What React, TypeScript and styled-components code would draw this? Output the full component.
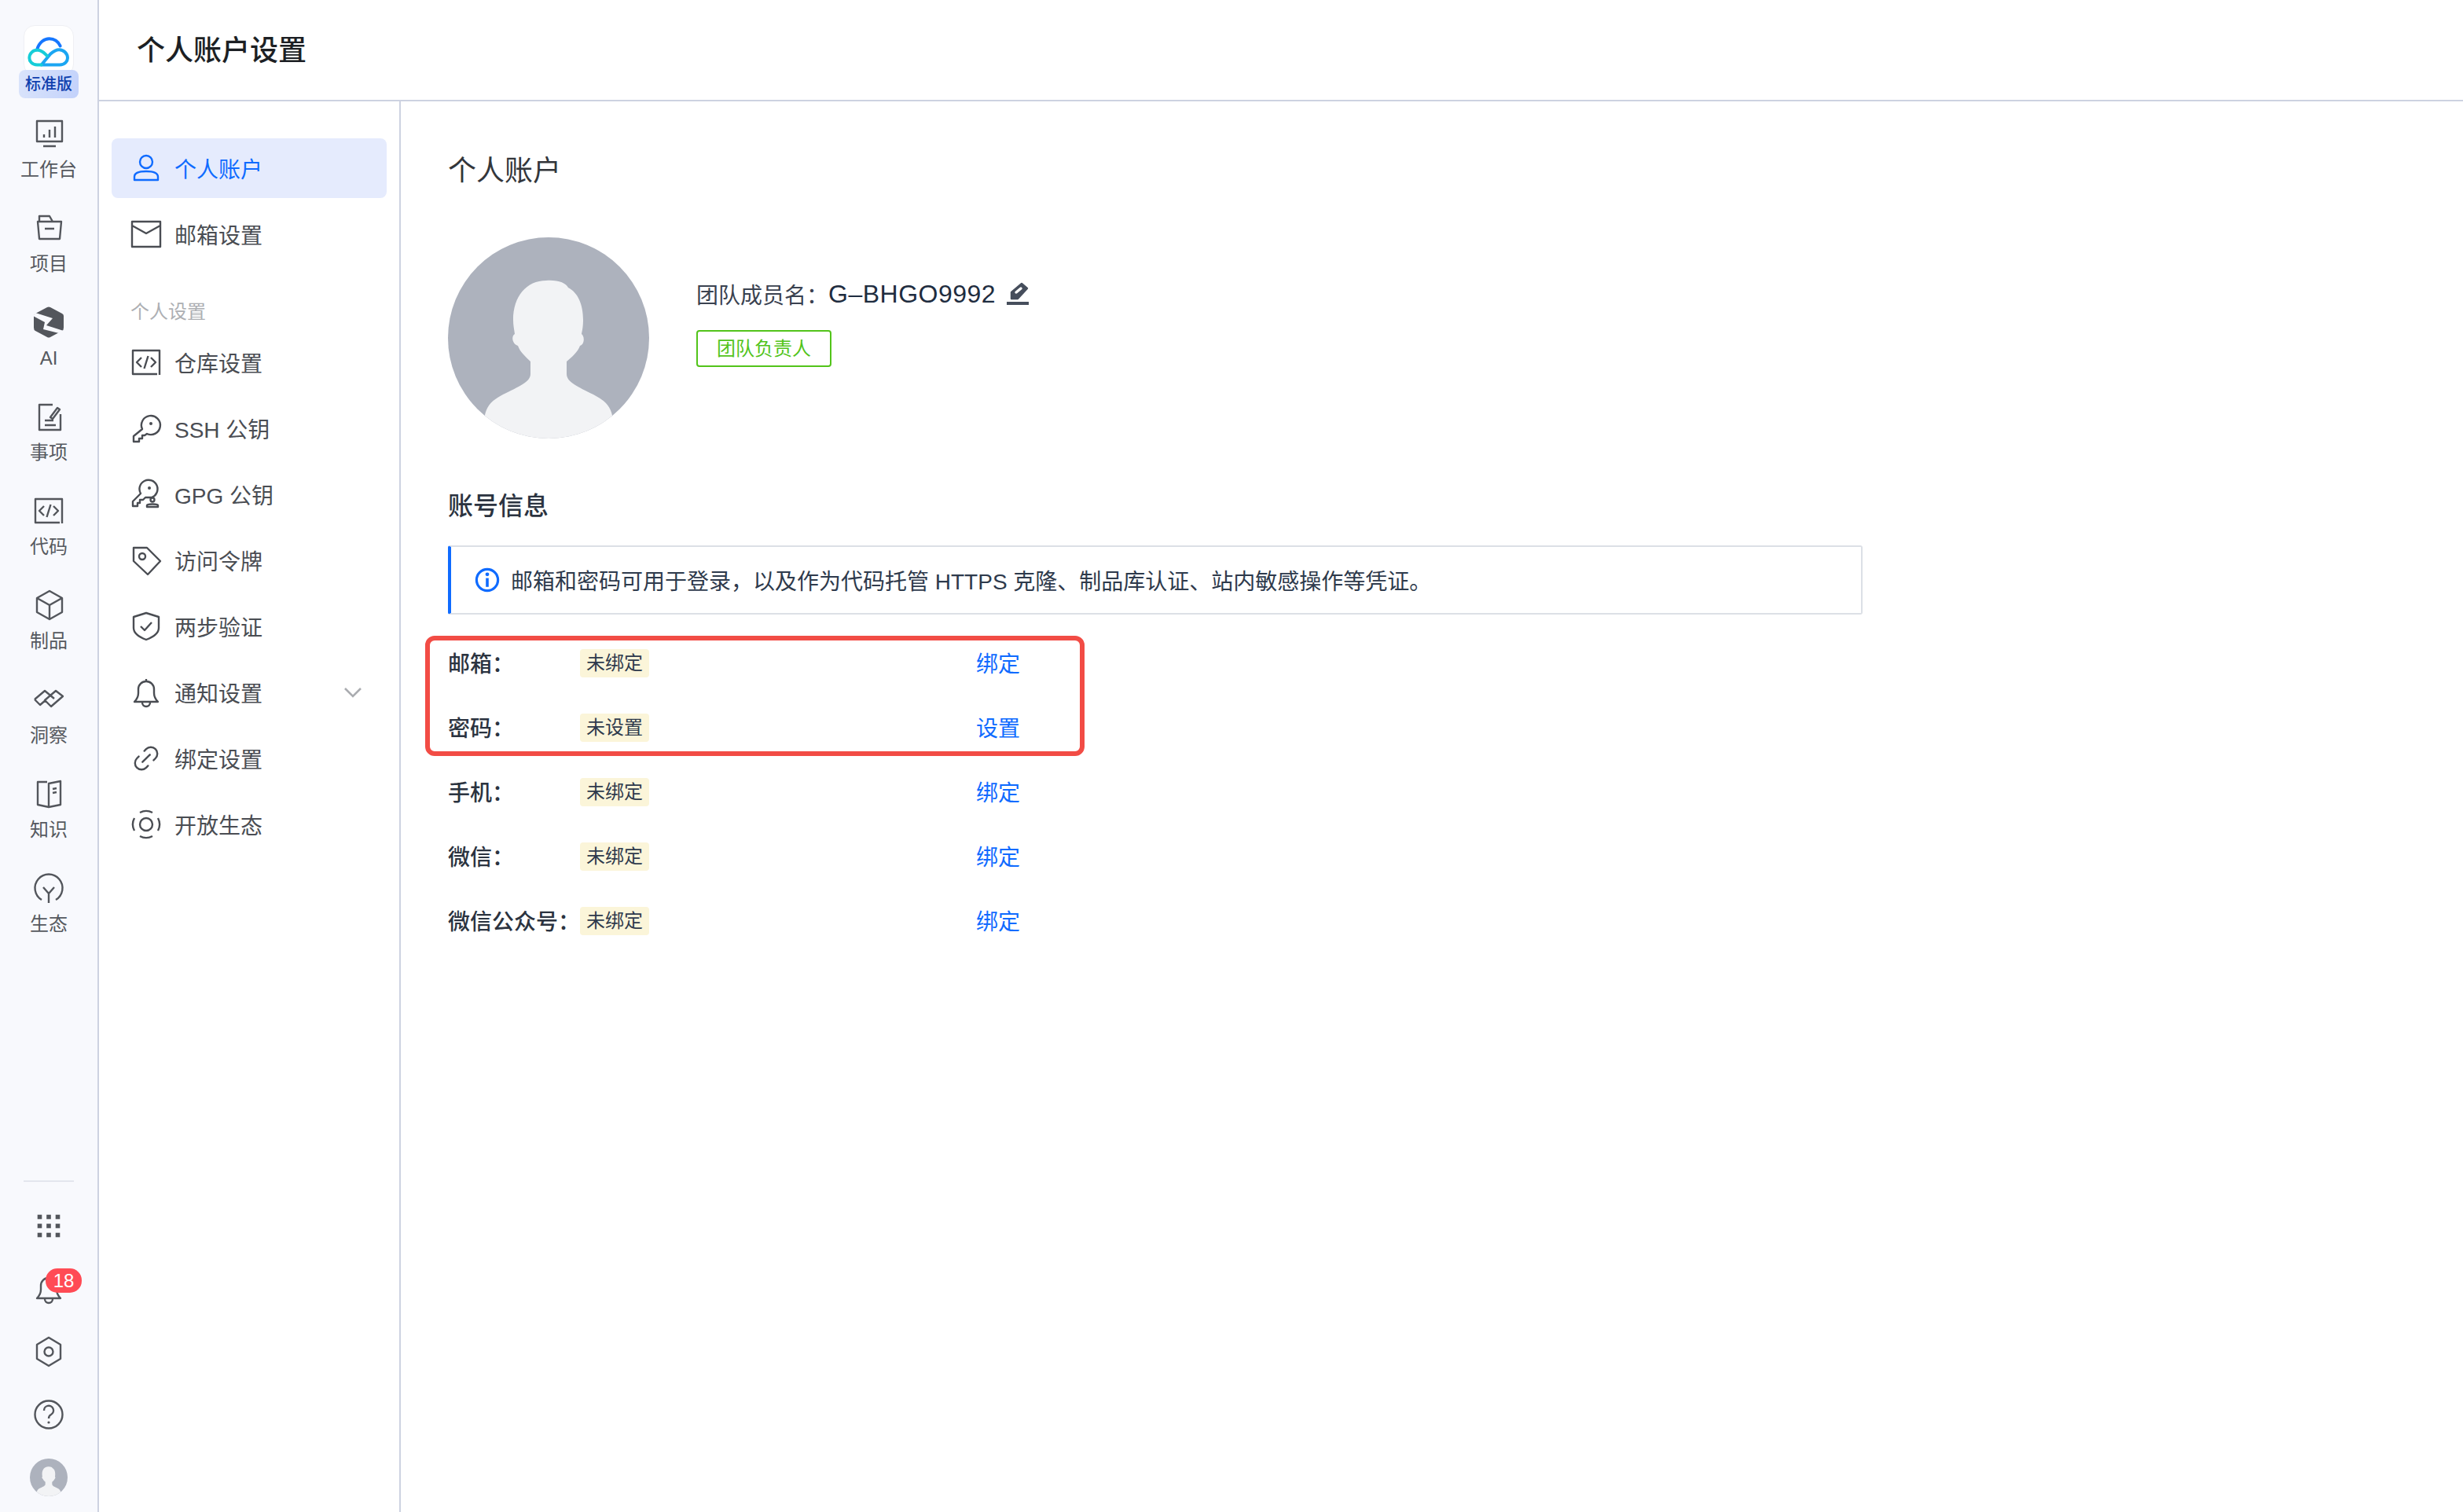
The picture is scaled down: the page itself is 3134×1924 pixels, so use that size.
import React from "react"
import styled, { createGlobalStyle } from "styled-components"
import { Link2 } from "lucide-react"

const GlobalStyle = createGlobalStyle`
  * {
    box-sizing: border-box;
  }
  html, body {
    margin: 0;
    padding: 0;
    background: #fff;
    font-family: "Liberation Sans", "Noto Sans CJK SC", sans-serif;
  }
`

const Page = styled.div`
  display: flex;
  width: 100vw;
  height: 100vh;
  overflow: hidden;
`

/* left rail */
const Rail = styled.aside`
  width: 126px;
  flex-shrink: 0;
  display: flex;
  flex-direction: column;
  align-items: center;
  padding: 32px 0 4px;
  background: #f8f9fd;
  border-right: 2px solid #cdd2e1;
`
const LogoBox = styled.div`
  width: 64px;
  height: 64px;
  display: flex;
  justify-content: center;
  padding-top: 12px;
  background: #fff;
  border: 1px solid #eff0f4;
  border-radius: 14px;
`
const EditionChip = styled.div`
  position: relative;
  width: 76px;
  height: 36px;
  margin-top: -7px;
  margin-bottom: 10px;
  border-radius: 8px;
  background: linear-gradient(100deg, #dae4fb, #c3d2fb);
  color: #0f3fae;
  font-size: 20px;
  font-weight: 500;
  line-height: 36px;
  text-align: center;
`
const RailNav = styled.nav`
  width: 100%;
`
const RailItem = styled.a`
  height: 120px;
  display: flex;
  flex-direction: column;
  align-items: center;
  padding-top: 15px;
  color: #53565c;
`
const RailLabel = styled.span`
  margin-top: 9px;
  font-size: 24px;
  line-height: 34px;
  color: #56595f;
`
const RailBottom = styled.div`
  width: 100%;
  margin-top: auto;
  display: flex;
  flex-direction: column;
  align-items: center;
`
const RailDivider = styled.div`
  width: 64px;
  height: 2px;
  margin-bottom: 16px;
  background: #e3e6ee;
`
const RailTool = styled.a`
  position: relative;
  width: 100%;
  height: 80px;
  display: flex;
  align-items: center;
  justify-content: center;
  color: #53565c;
`
const CountBadge = styled.span`
  position: absolute;
  top: 14px;
  left: 58px;
  width: 46px;
  height: 31px;
  border-radius: 15px;
  background: #ff4b55;
  color: #fff;
  font-size: 24px;
  line-height: 31px;
  text-align: center;
`

/* right side */
const Content = styled.div`
  flex: 1;
  min-width: 0;
  display: flex;
  flex-direction: column;
`
const TopBar = styled.header`
  height: 129px;
  flex-shrink: 0;
  padding-left: 48px;
  border-bottom: 2px solid #cdd2e1;
  color: #1c1f24;
  font-size: 36px;
  font-weight: 500;
  line-height: 129px;
`
const Body = styled.div`
  flex: 1;
  display: flex;
  min-height: 0;
`
const SideMenu = styled.div`
  width: 384px;
  flex-shrink: 0;
  padding: 47px 16px 0;
  border-right: 2px solid #cdd2e1;
`
const MenuItem = styled.a<{ $active?: boolean }>`
  height: 76px;
  margin-bottom: 8px;
  display: flex;
  align-items: center;
  gap: 16px;
  padding: 0 32px 0 24px;
  border-radius: 8px;
  background: ${(p) => (p.$active ? "#e5ebfd" : "transparent")};
  color: ${(p) => (p.$active ? "#0f6bff" : "#4a4d53")};
  font-size: 28px;
`
const MenuText = styled.span`
  flex: 1;
`
const MenuGroupLabel = styled.div`
  margin: 44px 0 9px;
  padding-left: 24px;
  color: #adafb3;
  font-size: 24px;
  line-height: 34px;
`
const Main = styled.main`
  flex: 1;
  padding: 64px 0 0 60px;
`
const PageTitle = styled.h1`
  margin: 0;
  color: #33363b;
  font-size: 36px;
  font-weight: 400;
  line-height: 50px;
`
const Profile = styled.section`
  margin-top: 59px;
  display: flex;
  gap: 60px;
`
const ProfileMeta = styled.div`
  padding-top: 50px;
`
const NameRow = styled.div`
  height: 44px;
  display: flex;
  align-items: center;
  color: #3a4250;
  font-size: 28px;
`
const NameValue = styled.span`
  margin-right: 14px;
  color: #1f2d40;
  font-size: 32px;
  letter-spacing: 0.5px;
`
const RoleTag = styled.div`
  width: 172px;
  height: 47px;
  margin-top: 24px;
  border: 2px solid #52c41a;
  border-radius: 4px;
  color: #52c41a;
  font-size: 24px;
  line-height: 44px;
  text-align: center;
`
const SectionTitle = styled.h2`
  margin: 64px 0 0;
  color: #2b3340;
  font-size: 32px;
  font-weight: 500;
  line-height: 44px;
`
const Notice = styled.div`
  width: 1800px;
  height: 88px;
  margin-top: 28px;
  display: flex;
  align-items: center;
  gap: 14px;
  padding-left: 30px;
  border: 2px solid #dce0e6;
  border-left: 4px solid #0f6bff;
  border-radius: 3px;
  color: #2e3a4c;
  font-size: 28px;
`
const AccountList = styled.div`
  position: relative;
  margin-top: 20px;
`
const AccountRow = styled.div`
  height: 82px;
  display: grid;
  grid-template-columns: 168px 504px auto;
  align-items: center;
  justify-content: start;
`
const AccountLabel = styled.span`
  color: #2b3340;
  font-size: 28px;
  font-weight: 500;
`
const StateTag = styled.span`
  width: 88px;
  height: 36px;
  margin-top: 2px;
  border-radius: 4px;
  background: #fbf5d9;
  color: #2e3a4c;
  font-size: 24px;
  line-height: 36px;
  text-align: center;
`
const ActionLink = styled.a`
  color: #0f6bff;
  font-size: 28px;
`
const Callout = styled.div`
  position: absolute;
  top: 7px;
  left: -29px;
  width: 839px;
  height: 153px;
  border: 6px solid #f24c45;
  border-radius: 12px;
`

/* icons */
const LineIcon = styled.svg<{ $size?: number; $weight?: number }>`
  width: ${(p) => p.$size ?? 40}px;
  height: ${(p) => p.$size ?? 40}px;
  flex-shrink: 0;
  fill: none;
  stroke: currentColor;
  stroke-width: ${(p) => p.$weight ?? 2.4};
  stroke-linejoin: round;
`
const RoundAvatar = styled.svg<{ $size: number }>`
  width: ${(p) => p.$size}px;
  height: ${(p) => p.$size}px;
  flex-shrink: 0;
  border-radius: 50%;
  background: #adb2bd;
`
const CloudLogo = styled.svg`
  width: 55px;
  height: 42px;
  fill: none;
  stroke-width: 12;
  stroke-linecap: round;
`
const PencilIcon = styled.svg`
  width: 28px;
  height: 30px;
`
const Chevron = styled.svg`
  width: 22px;
  height: 13px;
  fill: none;
  stroke: #aaacb0;
  stroke-width: 2.6;
`
const CloudBlue = styled.path`
  stroke: #1677ff;
`
const CloudCyan = styled.path`
  stroke: #16cdd8;
`
const CloudMid = styled.path`
  stroke: #1ba6f2;
`

const Icon = ({ children, size, weight }: { children: React.ReactNode; size?: number; weight?: number }) => (
  <LineIcon viewBox="0 0 40 40" $size={size} $weight={weight}>
    {children}
  </LineIcon>
)

const Avatar = ({ size }: { size: number }) => (
  <RoundAvatar viewBox="0 0 256 256" $size={size}>
    <path
      fill="#f2f3f5"
      d="M125 55C140 54 150 58 153 64C165 70 172 85 172 105C172 113 171 118 170 123C174 126 174 136 168 138C165 146 158 152 151 158V174C151 184 165 190 185 200C200 208 208 215 210 232V256H46V232C48 215 55 208 70 200C90 190 105 184 105 174V158C97 150 92 146 89 138C82 136 80 126 85 123C84 116 83 112 83 105C83 75 100 55 125 55Z"
    />
  </RoundAvatar>
)

const CodeGlyph = () => (
  <Icon>
    <path d="M37 36V5H3V35H34" />
    <path d="M14 14L8 20L14 26M26 14L32 20L26 26M22.5 12L17.5 28" />
  </Icon>
)

const railItems: { label: string; icon: React.ReactNode }[] = [
  {
    label: "工作台",
    icon: (
      <Icon>
        <path d="M5 4H37V30H5ZM13 36H29M14 25V21M21 25V15M28 25V11" />
      </Icon>
    ),
  },
  {
    label: "项目",
    icon: (
      <Icon>
        <path d="M8 12V5H21L25 12M6 12H36L34 34H8ZM15 21H27" />
      </Icon>
    ),
  },
  {
    label: "AI",
    icon: (
      <Icon>
        <path
          fill="currentColor"
          stroke="none"
          d="M22 1L37 9Q39 10 39 12V27Q39 30 37 31L22 39Q20 40 18 39L3 31Q1 30 1 27V12Q1 10 3 9L18 1Q20 0 22 1Z"
        />
        <path fill="#f8f9fd" stroke="none" d="M3 8L25 15L17 24L39 31L37 35L13 29L15 20L0 12Z" />
      </Icon>
    ),
  },
  {
    label: "事项",
    icon: (
      <Icon>
        <path d="M25 5H8V37H35V17M15 25H26M15 31H29M22 21L31 9L34 11L25 23Z" />
      </Icon>
    ),
  },
  { label: "代码", icon: <CodeGlyph /> },
  {
    label: "制品",
    icon: (
      <Icon>
        <path d="M21 2L37 11V29L21 38L5 29V11ZM5 11L21 20L37 11M21 20V38" />
      </Icon>
    ),
  },
  {
    label: "洞察",
    icon: (
      <Icon>
        <path d="M2 20L15 9L27 19M2 20L9 27L16 21M15 21L29 9L38 16L23 29Z" />
      </Icon>
    ),
  },
  {
    label: "知识",
    icon: (
      <Icon>
        <path d="M18 5H6V34L20 37L35 34V4L20 7V37M25 14L30 13M25 19L30 18" />
      </Icon>
    ),
  },
  {
    label: "生态",
    icon: (
      <Icon>
        <path d="M11 35A17.5 17.5 0 1 1 29 35M20 39V27L13 19M20 27L27 19" />
      </Icon>
    ),
  },
]

const BellGlyph = () => (
  <Icon>
    <path d="M5 32C8 29 10 26 10 21V16A10 10 0 0 1 30 16V21C30 26 32 29 35 32ZM15 33A5 5 0 0 0 25 33M20 3V6" />
  </Icon>
)

const gridDots = [0, 1, 2].flatMap((r) => [0, 1, 2].map((c) => ({ x: 8.5 + c * 11.5, y: 8.5 + r * 11.5 })))

type MenuEntry = { label: string; icon: React.ReactNode; expandable?: boolean }

const accountMenu: MenuEntry[] = [
  {
    label: "邮箱设置",
    icon: (
      <Icon>
        <path d="M2 4H38V36H2ZM2 9L20 19L38 9" />
      </Icon>
    ),
  },
]

const settingsMenu: MenuEntry[] = [
  { label: "仓库设置", icon: <CodeGlyph /> },
  {
    label: "SSH 公钥",
    icon: (
      <Icon>
        <path d="M15 21A12 12 0 1 1 21 27L18 29H15V33H11V37H4V30Z" />
        <circle cx="26" cy="14" r="2" fill="currentColor" stroke="none" />
      </Icon>
    ),
  },
  {
    label: "GPG 公钥",
    icon: (
      <Icon>
        <path d="M13 19A11.5 11.5 0 1 1 27 24H19L16 27H12V31H9V35H3V29Z" />
        <circle cx="24" cy="12" r="2" fill="currentColor" stroke="none" />
        <circle cx="28" cy="27" r="2.5" />
        <path d="M21 36V34C21 32 35 32 35 34V36Z" />
      </Icon>
    ),
  },
  {
    label: "访问令牌",
    icon: (
      <Icon>
        <path d="M4 4H21L38 21L22 38L4 21Z" />
        <circle cx="15" cy="15" r="4" />
      </Icon>
    ),
  },
  {
    label: "两步验证",
    icon: (
      <Icon>
        <path d="M20 3L36 8V22C36 30 28 34 20 37C12 34 4 30 4 22V8ZM13 20L18 25L27 15" />
      </Icon>
    ),
  },
  { label: "通知设置", icon: <BellGlyph />, expandable: true },
  {
    label: "绑定设置",
    icon: <Link2 size={40} strokeWidth={1.45} style={{ transform: "rotate(-45deg)" }} />,
  },
  {
    label: "开放生态",
    icon: (
      <Icon>
        <circle cx="20" cy="20" r="8" />
        <path d="M12 5A17 17 0 0 1 28 5M28 35A17 17 0 0 1 12 35M5 12A17 17 0 0 0 5 28M35 12A17 17 0 0 1 35 28" />
      </Icon>
    ),
  },
]

const accounts: { label: string; state: string; action: string }[] = [
  { label: "邮箱：", state: "未绑定", action: "绑定" },
  { label: "密码：", state: "未设置", action: "设置" },
  { label: "手机：", state: "未绑定", action: "绑定" },
  { label: "微信：", state: "未绑定", action: "绑定" },
  { label: "微信公众号：", state: "未绑定", action: "绑定" },
]

const renderMenu = (items: MenuEntry[]) =>
  items.map((item) => (
    <MenuItem key={item.label}>
      {item.icon}
      <MenuText>{item.label}</MenuText>
      {item.expandable && (
        <Chevron viewBox="0 0 22 13">
          <path d="M1 1L11 11L21 1" />
        </Chevron>
      )}
    </MenuItem>
  ))

export default function App() {
  return (
    <Page>
      <GlobalStyle />
      <Rail>
        <LogoBox>
          <CloudLogo viewBox="55 60 165 125">
            <CloudBlue d="M92 112C100 85 120 72 138 72C158 72 172 82 180 100" />
            <CloudMid d="M108 172H178C198 172 208 158 208 146C208 128 192 114 176 114C162 114 152 122 143 130L108 172" />
            <CloudCyan d="M108 172H92C72 172 62 158 62 146C62 128 76 116 92 116C106 116 116 124 124 132L130 138" />
          </CloudLogo>
        </LogoBox>
        <EditionChip>标准版</EditionChip>
        <RailNav>
          {railItems.map((item) => (
            <RailItem key={item.label}>
              {item.icon}
              <RailLabel>{item.label}</RailLabel>
            </RailItem>
          ))}
        </RailNav>
        <RailBottom>
          <RailDivider />
          <RailTool>
            <Icon>
              {gridDots.map((d) => (
                <rect key={`${d.x}-${d.y}`} x={d.x - 2.8} y={d.y - 2.8} width="5.6" height="5.6" fill="currentColor" stroke="none" />
              ))}
            </Icon>
          </RailTool>
          <RailTool>
            <BellGlyph />
            <CountBadge>18</CountBadge>
          </RailTool>
          <RailTool>
            <Icon>
              <path d="M20 2L35 11V29L20 38L5 29V11Z" />
              <circle cx="20" cy="20" r="5.5" />
            </Icon>
          </RailTool>
          <RailTool>
            <Icon>
              <circle cx="20" cy="20" r="17.5" />
              <path d="M14 15A6 6 0 1 1 23 20C21 21 20 22 20 25" />
              <circle cx="20" cy="30" r="1.6" fill="currentColor" stroke="none" />
            </Icon>
          </RailTool>
          <RailTool>
            <Avatar size={48} />
          </RailTool>
        </RailBottom>
      </Rail>
      <Content>
        <TopBar>个人账户设置</TopBar>
        <Body>
          <SideMenu>
            <MenuItem $active>
              <Icon>
                <circle cx="20" cy="12" r="8" />
                <path d="M5 35V31C5 26 11 24 20 24C29 24 35 26 35 31V35Z" />
              </Icon>
              <MenuText>个人账户</MenuText>
            </MenuItem>
            {renderMenu(accountMenu)}
            <MenuGroupLabel>个人设置</MenuGroupLabel>
            {renderMenu(settingsMenu)}
          </SideMenu>
          <Main>
            <PageTitle>个人账户</PageTitle>
            <Profile>
              <Avatar size={256} />
              <ProfileMeta>
                <NameRow>
                  团队成员名：
                  <NameValue>G–BHGO9992</NameValue>
                  <PencilIcon viewBox="0 0 28 30">
                    <path
                      fill="#464e5c"
                      stroke="#464e5c"
                      strokeWidth="2.4"
                      strokeLinejoin="round"
                      d="M19 2L26 8L14 21H6V13Z"
                    />
                    <path d="M12 13L18 8" stroke="#fff" strokeWidth="3.4" strokeLinecap="round" />
                    <rect y="25" width="28" height="4" fill="#464e5c" />
                  </PencilIcon>
                </NameRow>
                <RoleTag>团队负责人</RoleTag>
              </ProfileMeta>
            </Profile>
            <SectionTitle>账号信息</SectionTitle>
            <Notice>
              <Icon size={32} weight={4}>
                <circle cx="20" cy="20" r="17" stroke="#0f6bff" />
                <path d="M20 17V31" stroke="#0f6bff" strokeWidth="4.5" />
                <circle cx="20" cy="11" r="3" fill="#0f6bff" stroke="none" />
              </Icon>
              邮箱和密码可用于登录，以及作为代码托管 HTTPS 克隆、制品库认证、站内敏感操作等凭证。
            </Notice>
            <AccountList>
              {accounts.map((row) => (
                <AccountRow key={row.label}>
                  <AccountLabel>{row.label}</AccountLabel>
                  <StateTag>{row.state}</StateTag>
                  <ActionLink>{row.action}</ActionLink>
                </AccountRow>
              ))}
              <Callout />
            </AccountList>
          </Main>
        </Body>
      </Content>
    </Page>
  )
}
